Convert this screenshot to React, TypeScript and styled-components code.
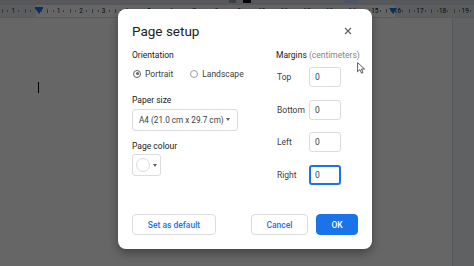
import React from "react";
import styled, { createGlobalStyle } from "styled-components";

const GlobalStyle = createGlobalStyle`
  html, body {
    margin: 0;
    padding: 0;
    width: 474px;
    height: 266px;
    overflow: hidden;
    font-family: Roboto, "Liberation Sans", sans-serif;
  }
`;

const CM = 22.6;

const Screen = styled.div`
  position: relative;
  width: 474px;
  height: 266px;
  overflow: hidden;
  display: flex;
  flex-direction: column;
  background: #fff;
`;

// ---- underlying docs editor ----
const TopBar = styled.div`
  height: 5px;
  background: #d9dde3;
  display: flex;
  align-items: flex-start;
  padding-left: 229px;
`;

const Chip = styled.div<{ $w: number; $color: string; $gap?: number }>`
  width: ${(p) => p.$w}px;
  height: 3px;
  margin-left: ${(p) => p.$gap || 0}px;
  background: ${(p) => p.$color};
`;

const Ruler = styled.div`
  position: relative;
  height: 12px;
  display: flex;
  padding-left: 2px;
  background: linear-gradient(
    to right,
    #e6e8eb 0 36px,
    #fff 36px 395px,
    #e6e8eb 395px
  );
  border-bottom: 1px solid #e0e0e0;
`;

const RulerCell = styled.div`
  flex: 0 0 ${CM}px;
  display: flex;
  align-items: center;
  justify-content: center;
  font-size: 6.5px;
  color: #202124;
  background:
    linear-gradient(#8a8f96, #8a8f96) 0 50% / 1px 4px no-repeat,
    linear-gradient(#8a8f96, #8a8f96) 25% 50% / 1px 2px no-repeat,
    linear-gradient(#8a8f96, #8a8f96) 75% 50% / 1px 2px no-repeat;
`;

const IndentMarker = styled.div<{ $x: number }>`
  position: absolute;
  left: ${(p) => p.$x}px;
  top: 3px;
  width: 0;
  height: 0;
  border-left: 4px solid transparent;
  border-right: 4px solid transparent;
  border-top: 6px solid #1a73e8;
`;

const IndentBar = styled.div`
  position: absolute;
  left: 35px;
  top: 2px;
  width: 8px;
  height: 2px;
  background: #1a73e8;
`;

const Canvas = styled.div`
  flex: 1;
  display: flex;
`;

const Page = styled.div`
  flex: 1;
  background: #fff;
  padding: 64px 0 0 38px;
`;

const TextCaret = styled.div`
  width: 1px;
  height: 11px;
  background: #000;
`;

const Gutter = styled.div`
  width: 21px;
  background: #f1f3f4;
  border-left: 1px solid #dadce0;
`;

const Scrim = styled.div`
  position: absolute;
  inset: 0;
  background: rgba(0, 0, 0, 0.6);
`;

// ---- dialog ----
const Dialog = styled.div`
  position: absolute;
  left: 118px;
  top: 9px;
  width: 254px;
  height: 240px;
  box-sizing: border-box;
  padding: 14px;
  background: #fff;
  border-radius: 8px;
  box-shadow: 0 4px 10px rgba(0, 0, 0, 0.35);
  display: flex;
  flex-direction: column;
  color: #3c4043;
  font-size: 8.5px;
`;

const Header = styled.div`
  height: 16px;
  display: flex;
  align-items: center;
  justify-content: space-between;
`;

const Title = styled.h2`
  margin: 0;
  font-size: 13.5px;
  font-weight: 400;
  color: #202124;
`;

const CloseButton = styled.button`
  border: 0;
  padding: 0;
  margin-right: 6px;
  width: 8px;
  height: 8px;
  background: none;
  display: flex;
`;

const Body = styled.div`
  display: grid;
  grid-template-columns: 144px 82px;
  margin-top: 11px;
`;

const Column = styled.div`
  display: flex;
  flex-direction: column;
  align-items: flex-start;
`;

const SectionLabel = styled.div<{ $top?: number }>`
  line-height: 11px;
  font-weight: 400;
  color: #202124;
  margin-top: ${(p) => p.$top || 0}px;
  white-space: nowrap;
`;

const Hint = styled.span`
  color: #80868b;
`;

const RadioRow = styled.div`
  display: flex;
  align-items: center;
  height: 12px;
  margin-top: 6.5px;
  margin-left: 1px;
  gap: 17px;
`;

const RadioOption = styled.label`
  display: flex;
  align-items: center;
  gap: 4px;
`;

const RadioCircle = styled.span<{ $checked?: boolean }>`
  width: 8px;
  height: 8px;
  box-sizing: border-box;
  border-radius: 50%;
  border: 1px solid ${(p) => (p.$checked ? "#5f6368" : "#9aa0a6")};
  display: flex;
  align-items: center;
  justify-content: center;

  &::after {
    content: "";
    width: 3px;
    height: 3px;
    border-radius: 50%;
    background: ${(p) => (p.$checked ? "#5f6368" : "transparent")};
  }
`;

const Select = styled.div`
  margin-top: 3px;
  width: 106px;
  height: 22px;
  box-sizing: border-box;
  border: 1px solid #dadce0;
  border-radius: 3px;
  display: flex;
  align-items: center;
  justify-content: space-between;
  padding: 0 7px 0 6px;
  font-size: 8.2px;
  white-space: nowrap;
`;

const Caret = styled.span`
  width: 0;
  height: 0;
  border-left: 2.5px solid transparent;
  border-right: 2.5px solid transparent;
  border-top: 3px solid #5f6368;
`;

const ColourButton = styled.div`
  margin-top: 2.5px;
  width: 29px;
  height: 22px;
  box-sizing: border-box;
  border: 1px solid #dadce0;
  border-radius: 3px;
  display: flex;
  align-items: center;
  padding-left: 3px;
  gap: 3px;
`;

const Swatch = styled.span`
  width: 14px;
  height: 14px;
  box-sizing: border-box;
  border-radius: 50%;
  border: 1px solid #dadce0;
  background: #fff;
`;

const MarginList = styled.div`
  display: flex;
  flex-direction: column;
  gap: 12.6px;
  margin-top: 6px;
`;

const MarginRow = styled.div`
  display: flex;
  align-items: center;
  height: 20px;
`;

const MarginLabel = styled.span`
  width: 32px;
  padding-left: 1px;
`;

const MarginInput = styled.input<{ $focused?: boolean }>`
  width: 32px;
  height: 20px;
  box-sizing: border-box;
  border: ${(p) => (p.$focused ? "2px solid #1a73e8" : "1px solid #dadce0")};
  border-radius: 3px;
  padding: 0 0 0 ${(p) => (p.$focused ? 4 : 5)}px;
  font-family: Roboto, "Liberation Sans", sans-serif;
  font-size: 8.5px;
  color: #3c4043;
  outline: none;
`;

const Footer = styled.div`
  margin-top: auto;
  display: flex;
  align-items: center;
`;

const Button = styled.button<{ $w: number; $primary?: boolean; $push?: boolean }>`
  width: ${(p) => p.$w}px;
  height: 21px;
  margin-left: ${(p) => (p.$push ? "auto" : "0")};
  border: 1px solid ${(p) => (p.$primary ? "#1a73e8" : "#dadce0")};
  border-radius: 4px;
  background: ${(p) => (p.$primary ? "#1a73e8" : "#fff")};
  color: ${(p) => (p.$primary ? "#fff" : "#1a73e8")};
  font-family: Roboto, "Liberation Sans", sans-serif;
  font-size: 8.5px;
  font-weight: 500;
  padding: 0;
`;

const ButtonGap = styled.div`
  width: 8px;
`;

const Pointer = styled.svg`
  position: absolute;
  left: 357px;
  top: 62px;
`;

const rulerLabels = Array.from({ length: 21 }, (_, i) => i - 1);

const margins = [
  { label: "Top" },
  { label: "Bottom" },
  { label: "Left" },
  { label: "Right", focused: true },
];

export default function App() {
  return (
    <>
      <GlobalStyle />
      <Screen>
        <TopBar>
          <Chip $w={7} $color="#9aa0a6" />
          <Chip $w={8} $color="#111" $gap={7} />
          <Chip $w={12} $color="#c2d5f5" $gap={94} />
        </TopBar>
        <Ruler>
          {rulerLabels.map((n) => (
            <RulerCell key={n}>{n === 0 ? "" : Math.abs(n)}</RulerCell>
          ))}
          <IndentBar />
          <IndentMarker $x={35} />
          <IndentMarker $x={389} />
        </Ruler>
        <Canvas>
          <Page>
            <TextCaret />
          </Page>
          <Gutter />
        </Canvas>
        <Scrim />

        <Dialog>
          <Header>
            <Title>Page setup</Title>
            <CloseButton aria-label="Close">
              <svg width="8" height="8" viewBox="0 0 8 8">
                <path d="M1 1L7 7M7 1L1 7" stroke="#5f6368" strokeWidth="1.2" />
              </svg>
            </CloseButton>
          </Header>
          <Body>
            <Column>
              <SectionLabel>Orientation</SectionLabel>
              <RadioRow>
                <RadioOption>
                  <RadioCircle $checked />
                  Portrait
                </RadioOption>
                <RadioOption>
                  <RadioCircle />
                  Landscape
                </RadioOption>
              </RadioRow>
              <SectionLabel $top={15}>Paper size</SectionLabel>
              <Select>
                A4 (21.0 cm x 29.7 cm)
                <Caret />
              </Select>
              <SectionLabel $top={10}>Page colour</SectionLabel>
              <ColourButton>
                <Swatch />
                <Caret />
              </ColourButton>
            </Column>
            <Column>
              <SectionLabel>
                Margins <Hint>(centimeters)</Hint>
              </SectionLabel>
              <MarginList>
                {margins.map((m) => (
                  <MarginRow key={m.label}>
                    <MarginLabel>{m.label}</MarginLabel>
                    <MarginInput readOnly value="0" $focused={m.focused} />
                  </MarginRow>
                ))}
              </MarginList>
            </Column>
          </Body>
          <Footer>
            <Button $w={84}>Set as default</Button>
            <Button $w={57} $push>
              Cancel
            </Button>
            <ButtonGap />
            <Button $w={42} $primary>
              OK
            </Button>
          </Footer>
        </Dialog>

        <Pointer width="9" height="12" viewBox="0 0 9 12">
          <path
            d="M0.6 0.6 L0.6 9.8 L2.9 7.6 L4.5 11.2 L6 10.5 L4.5 7 L7.6 7 Z"
            fill="#fff"
            stroke="#333"
            strokeWidth="0.8"
            strokeLinejoin="round"
          />
        </Pointer>
      </Screen>
    </>
  );
}
